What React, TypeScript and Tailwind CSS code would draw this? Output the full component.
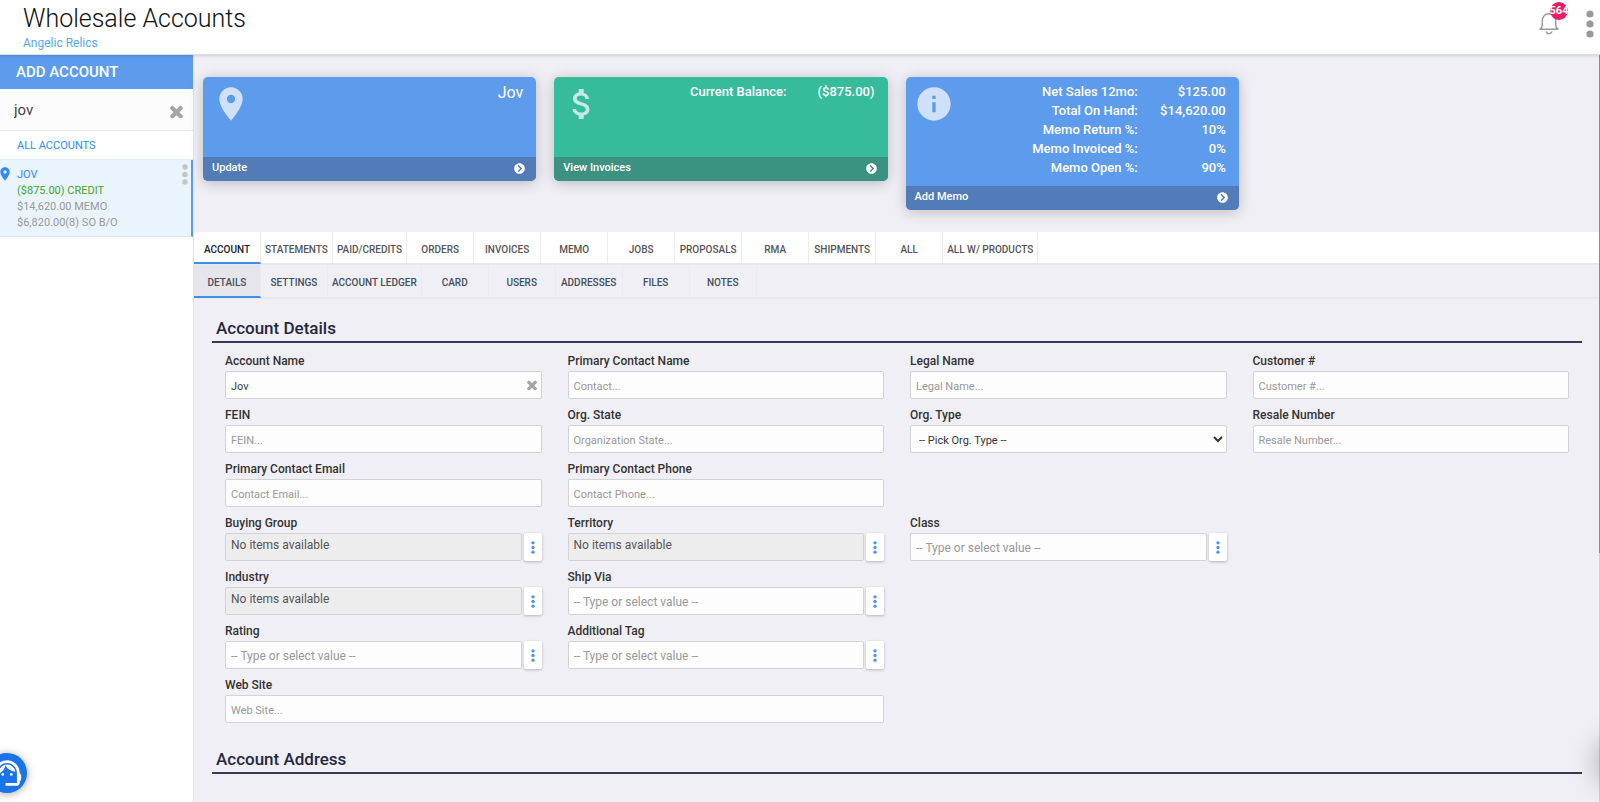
import type { ReactNode } from "react";
import { FaChevronCircleRight } from "react-icons/fa";
import { MdAttachMoney, MdInfo, MdLocationOn, MdSupportAgent } from "react-icons/md";

const TABS = [
  "Account",
  "Statements",
  "Paid/Credits",
  "Orders",
  "Invoices",
  "Memo",
  "Jobs",
  "Proposals",
  "RMA",
  "Shipments",
  "All",
  "All w/ Products",
];

const SUB_TABS = [
  "Details",
  "Settings",
  "Account Ledger",
  "Card",
  "Users",
  "Addresses",
  "Files",
  "Notes",
];

const MEMO_STATS = [
  ["Net Sales 12mo:", "$125.00"],
  ["Total On Hand:", "$14,620.00"],
  ["Memo Return %:", "10%"],
  ["Memo Invoiced %:", "0%"],
  ["Memo Open %:", "90%"],
];

type FieldKind = "text" | "select" | "picker" | "empty";

type FieldDef = {
  id: string;
  label: string;
  kind: FieldKind;
  hint?: string;
  value?: string;
  place?: string;
};

const FIELDS: FieldDef[] = [
  { id: "name", label: "Account Name", kind: "text", value: "Jov" },
  { id: "contact", label: "Primary Contact Name", kind: "text", hint: "Contact..." },
  { id: "legal", label: "Legal Name", kind: "text", hint: "Legal Name..." },
  { id: "customer", label: "Customer #", kind: "text", hint: "Customer #..." },
  { id: "fein", label: "FEIN", kind: "text", hint: "FEIN..." },
  { id: "state", label: "Org. State", kind: "text", hint: "Organization State..." },
  { id: "type", label: "Org. Type", kind: "select", hint: "-- Pick Org. Type --" },
  { id: "resale", label: "Resale Number", kind: "text", hint: "Resale Number..." },
  { id: "email", label: "Primary Contact Email", kind: "text", hint: "Contact Email..." },
  { id: "phone", label: "Primary Contact Phone", kind: "text", hint: "Contact Phone..." },
  { id: "group", label: "Buying Group", kind: "empty", place: "col-start-1" },
  { id: "territory", label: "Territory", kind: "empty" },
  { id: "class", label: "Class", kind: "picker" },
  { id: "industry", label: "Industry", kind: "empty", place: "col-start-1" },
  { id: "ship", label: "Ship Via", kind: "picker" },
  { id: "rating", label: "Rating", kind: "picker", place: "col-start-1" },
  { id: "tag", label: "Additional Tag", kind: "picker" },
  { id: "web", label: "Web Site", kind: "text", hint: "Web Site...", place: "col-start-1 col-span-2" },
];

function Times({ className }: { className: string }) {
  return (
    <svg viewBox="302 238 1188 1188" className={className} fill="currentColor" aria-hidden="true">
      <path
        transform="translate(0 -64)"
        d="M1490 1322q0 40-28 68l-136 136q-28 28-68 28t-68-28l-294-294-294 294q-28 28-68 28t-68-28l-136-136q-28-28-28-68t28-68l294-294-294-294q-28-28-28-68t28-68l136-136q28-28 68-28t68 28l294 294 294-294q28-28 68-28t68 28l136 136q28 28 28 68t-28 68l-294 294 294 294q28 28 28 68z"
      />
    </svg>
  );
}

function Dots({ className }: { className: string }) {
  return (
    <svg viewBox="0 0 8 28" className={className} fill="currentColor" aria-hidden="true">
      <circle cx="4" cy="4" r="3.6" />
      <circle cx="4" cy="14" r="3.6" />
      <circle cx="4" cy="24" r="3.6" />
    </svg>
  );
}

function Header() {
  return (
    <header className="relative z-10 flex h-[55px] items-start justify-between border-b border-[#d5deea] bg-white pl-[23px] pr-[6px] shadow-sm">
      <div>
        <h1 className="pt-[3px] text-[25px] font-light leading-[32px] text-[#111]">Wholesale Accounts</h1>
        <a href="#company" className="block text-[12px] leading-4 text-[#56a8f5]">
          Angelic Relics
        </a>
      </div>
      <div className="flex gap-[27px] pt-[10px]">
        <button type="button" aria-label="Notifications" className="relative h-[26px] w-5 text-[#999]">
          <svg viewBox="0 0 20 26" className="h-[26px] w-5" fill="none" stroke="currentColor" strokeWidth="1.4">
            <path d="M1 19.2h18c-1.800-1-2.300-2.500-2.300-5V10.500C16.700 6.500 14 3.800 10 3.800S3.300 6.500 3.300 10.500v3.700c0 2.500-.5 4-2.300 5z" strokeLinejoin="round" />
            <path d="M7 21.500c.6 1.600 1.600 2.200 3 2.200s2.400-.6 3-2.200" />
          </svg>
          <span className="absolute -top-2 left-[11px] flex h-[18px] w-[18px] items-center justify-center rounded-full bg-[#e91e63] text-[11px] font-bold leading-[18px] text-white">
            564
          </span>
        </button>
        <button type="button" aria-label="More" className="h-[28px] w-2 text-[#999]">
          <Dots className="h-[28px] w-2" />
        </button>
      </div>
    </header>
  );
}

function Sidebar() {
  return (
    <aside className="w-[194px] shrink-0 border-r border-[#dfe5ec] bg-white">
      <button type="button" className="block h-[34px] w-full bg-[#5d9bec] pl-4 text-left text-[15px] font-medium text-white">
        ADD ACCOUNT
      </button>
      <div className="mt-[2px] flex h-[40px] items-center border-b border-[#e6e9ec] bg-[#fcfcfc] pl-[14px] pr-[10px]">
        <input
          aria-label="Search accounts"
          defaultValue="jov"
          className="min-w-0 flex-1 bg-transparent text-[15px] text-[#444] outline-none"
        />
        <button type="button" aria-label="Clear search" className="pt-[2px] text-[#a5a5a5]">
          <Times className="size-[13px]" />
        </button>
      </div>
      <a href="#all" className="block h-[29px] border-b border-[#e6eef6] pl-[17px] text-[11px] leading-[29px] text-[#2d8cff]">
        ALL ACCOUNTS
      </a>
      <div className="relative h-[77px] border-b border-r-2 border-b-[#d8e6ee] border-r-[#5d9bec] bg-[#eaf4fe] pl-[17px] pt-[7px] text-[11px] leading-4 text-[#999]">
        <MdLocationOn className="absolute -left-[3px] top-[6px] size-4 text-[#2d8cff]" />
        <a href="#jov" className="block text-[#2d8cff]">
          JOV
        </a>
        <p className="text-[#45a52d]">($875.00) CREDIT</p>
        <p>$14,620.00 MEMO</p>
        <p>$6,820.00(8) SO B/O</p>
        <button type="button" aria-label="Account menu" className="absolute right-[3px] top-1 text-[#c4c4c4]">
          <Dots className="h-[21px] w-[6px]" />
        </button>
      </div>
    </aside>
  );
}

function Card({
  icon,
  action,
  tone,
  foot,
  children,
}: {
  icon: ReactNode;
  action: string;
  tone: string;
  foot: string;
  children: ReactNode;
}) {
  return (
    <section className={`overflow-hidden rounded-[5px] text-white shadow-[0_2px_14px_rgba(0,0,0,0.22)] ${tone}`}>
      <div className="flex min-h-[80px] justify-between pb-[9px] pl-2 pr-[13px] pt-[5px]">
        <div className="pt-[2px] text-white/70">{icon}</div>
        {children}
      </div>
      <button
        type="button"
        className={`flex h-6 w-full items-center justify-between pb-px pl-[9px] pr-[11px] text-[11px] font-medium ${foot}`}
      >
        {action}
        <FaChevronCircleRight className="size-[11px]" />
      </button>
    </section>
  );
}

function Stats({ rows }: { rows: string[][] }) {
  return (
    <table className="self-start text-right text-[13px] font-medium">
      <tbody>
        {rows.map(([label, value]) => (
          <tr key={label} className="h-[19px] leading-[19px]">
            <td>{label}</td>
            <td className="w-[88px]">{value}</td>
          </tr>
        ))}
      </tbody>
    </table>
  );
}

function Cards() {
  return (
    <div className="grid grid-cols-4 items-start gap-[18px] px-[9px] py-[22px]">
      <Card icon={<MdLocationOn className="size-10" />} action="Update" tone="bg-[#5d9bec]" foot="bg-[#527cb7]">
        <p className="text-[16px] leading-[22px]">Jov</p>
      </Card>
      <Card icon={<MdAttachMoney className="size-10" />} action="View Invoices" tone="bg-[#36bc9b]" foot="bg-[#3b9281]">
        <Stats rows={[["Current Balance:", "($875.00)"]]} />
      </Card>
      <Card icon={<MdInfo className="size-10" />} action="Add Memo" tone="bg-[#5d9bec]" foot="bg-[#527cb7]">
        <Stats rows={MEMO_STATS} />
      </Card>
    </div>
  );
}

function Tabs() {
  return (
    <>
      <nav className="flex h-[33px] border-b-2 border-[#e8e9ec] bg-white text-[10px] text-[#555]">
        {TABS.map((tab, i) => (
          <button
            key={tab}
            type="button"
            className={`h-8 min-w-[67px] whitespace-nowrap border-b-2 border-r border-r-[#ebebee] px-1 pt-1 font-medium uppercase ${
              i === 0 ? "border-b-[#3c8ff0] text-[#222]" : "border-b-transparent"
            }`}
          >
            {tab}
          </button>
        ))}
      </nav>
      <nav className="flex h-[34px] border-b-2 border-[#e8e8ec] text-[10px] text-[#444f60]">
        {SUB_TABS.map((tab, i) => (
          <button
            key={tab}
            type="button"
            className={`h-[33px] min-w-[67px] whitespace-nowrap border-b-2 border-r border-r-[#ebebef] px-1 pt-1 font-medium uppercase ${
              i === 0 ? "border-b-[#3c8ff0] bg-[#e5e5eb]" : "border-b-transparent"
            }`}
          >
            {tab}
          </button>
        ))}
      </nav>
    </>
  );
}

const BOX = "h-[28px] w-full min-w-0 rounded-[2px] border border-[#d3d3d5] bg-[#fdfdfd] outline-none";

function Control({ field }: { field: FieldDef }) {
  if (field.kind === "select") {
    return (
      <select id={field.id} className={`${BOX} px-1 pt-[2px] text-[11px] text-[#333]`}>
        <option>{field.hint}</option>
      </select>
    );
  }

  if (field.kind === "text") {
    return (
      <div className="relative">
        <input
          id={field.id}
          defaultValue={field.value}
          placeholder={field.hint}
          className={`${BOX} px-[5px] pt-[2px] text-[11px] text-[#444] placeholder:text-[#999]`}
        />
        {field.value && (
          <button type="button" aria-label="Clear" className="absolute right-[5px] top-[9px] text-[#a5a5a5]">
            <Times className="size-[10px]" />
          </button>
        )}
      </div>
    );
  }

  return (
    <div className="flex gap-[2px]">
      {field.kind === "empty" ? (
        <input
          id={field.id}
          readOnly
          value="No items available"
          className="h-[28px] min-w-0 flex-1 rounded-[2px] border border-[#d3d3d5] bg-[#ededed] px-[5px] pb-1 text-[12px] text-[#555] outline-none"
        />
      ) : (
        <input
          id={field.id}
          placeholder="-- Type or select value --"
          className={`${BOX} flex-1 px-[5px] pt-[2px] text-[12px] placeholder:text-[#999]`}
        />
      )}
      <button
        type="button"
        aria-label={`${field.label} options`}
        className="flex h-[28px] w-[18px] shrink-0 items-center justify-center rounded-[2px] bg-white text-[#4a94f0] shadow-[0_1px_3px_rgba(0,0,0,0.25)]"
      >
        <Dots className="h-[13px] w-1" />
      </button>
    </div>
  );
}

function SectionTitle({ children }: { children: ReactNode }) {
  return (
    <h2 className="border-b-2 border-[#363c55] pl-1 text-[17px] font-medium leading-[26px] text-[#23283f]">
      {children}
    </h2>
  );
}

export default function App() {
  return (
    <div className="relative flex min-h-screen flex-col overflow-hidden bg-[#f0eff5] font-['Roboto',sans-serif]">
      <Header />
      <div className="flex flex-1">
        <Sidebar />
        <main className="min-w-0 flex-1">
          <Cards />
          <Tabs />
          <div className="pl-[18px] pr-[17px] pt-4">
            <SectionTitle>Account Details</SectionTitle>
            <div className="grid grid-cols-4 gap-x-[26px] gap-y-[6px] px-[13px] pb-[23px] pt-2">
              {FIELDS.map((field) => (
                <div key={field.id} className={field.place}>
                  <label htmlFor={field.id} className="block text-[12px] font-medium leading-5 text-[#333]">
                    {field.label}
                  </label>
                  <Control field={field} />
                </div>
              ))}
            </div>
            <SectionTitle>Account Address</SectionTitle>
          </div>
        </main>
        {/* scroll track */}
        <div className="w-px bg-[#d0d0d3]">
          <div className="h-2/3 bg-[#888a8f]" />
        </div>
      </div>
      {/* support launcher, half tucked behind the left edge */}
      <button
        type="button"
        aria-label="Support"
        className="absolute -left-[13px] bottom-[9px] flex size-10 items-center justify-center rounded-full bg-[#1a73e8] text-white shadow-[0_1px_8px_rgba(0,0,0,0.35)]"
      >
        <MdSupportAgent className="size-[34px] shrink-0" />
      </button>
      <div className="pointer-events-none absolute -right-10 bottom-[20px] size-10 rounded-full shadow-[0_0_30px_rgba(0,0,0,0.4)]" />
    </div>
  );
}
